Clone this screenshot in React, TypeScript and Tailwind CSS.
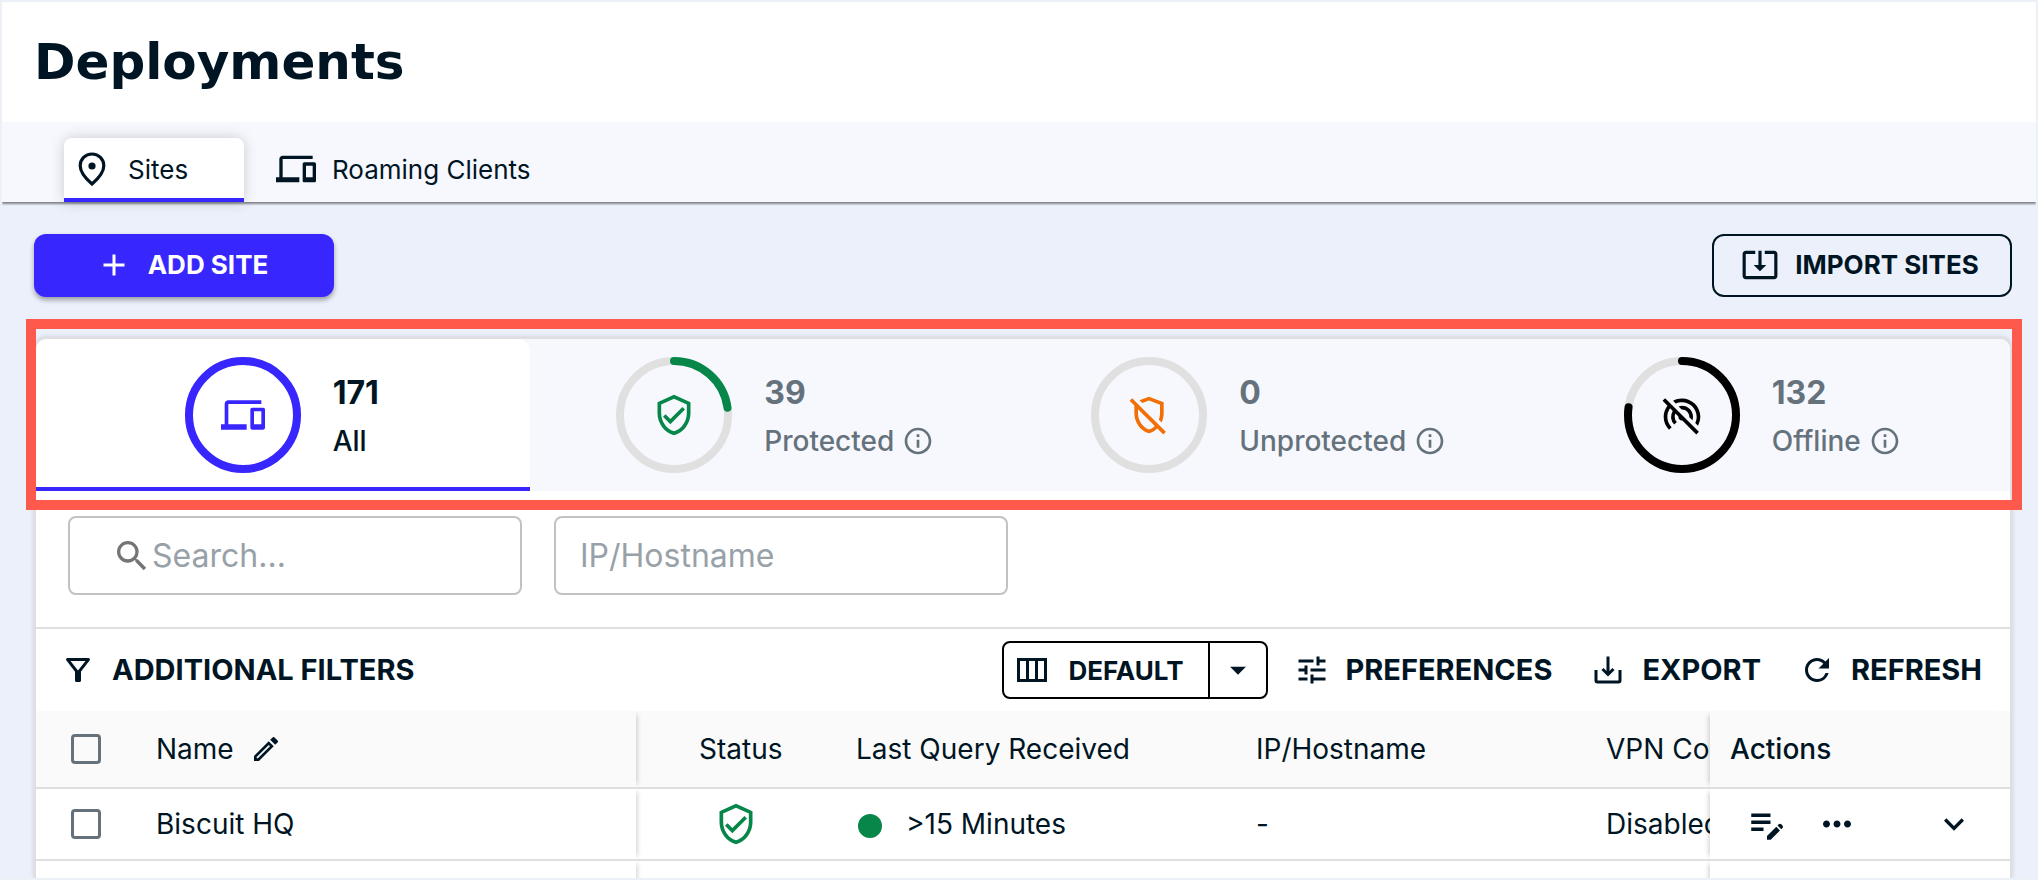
import type { ReactNode } from 'react'
import type { IconType } from 'react-icons'
import {
  MdAdd,
  MdArrowDropDown,
  MdEditNote,
  MdExpandMore,
  MdMoreHoriz,
  MdOutlineDevices,
  MdOutlineEdit,
  MdOutlineFilterAlt,
  MdOutlineInfo,
  MdOutlineRemoveModerator,
  MdOutlineSystemUpdateAlt,
  MdOutlineVerifiedUser,
  MdRefresh,
  MdSearch,
  MdTune,
  MdWifiTetheringOff,
} from 'react-icons/md'

const stats = [
  { icon: MdOutlineDevices, count: 171, label: 'All', ratio: 1, color: '#3826ff' },
  { icon: MdOutlineVerifiedUser, count: 39, label: 'Protected', ratio: 0.228, color: '#068649' },
  { icon: MdOutlineRemoveModerator, count: 0, label: 'Unprotected', ratio: 0, color: '#f26f05' },
  { icon: MdWifiTetheringOff, count: 132, label: 'Offline', ratio: 0.772, color: '#000000' },
]

type RingProps = {
  icon: IconType
  ratio: number
  color: string
}

function Ring({ icon: Icon, ratio, color }: RingProps) {
  const length = 2 * Math.PI * 54

  return (
    <span className="grid shrink-0 place-items-center">
      <svg className="col-start-1 row-start-1 size-[116px] -rotate-90" viewBox="0 0 116 116" fill="none">
        <circle cx="58" cy="58" r="54" stroke="#e0e0e0" strokeWidth="8" />
        {ratio > 0 && (
          <circle
            cx="58"
            cy="58"
            r="54"
            stroke={color}
            strokeWidth="8"
            strokeLinecap="round"
            strokeDasharray={`${length * ratio} ${length}`}
          />
        )}
      </svg>
      <Icon className="col-start-1 row-start-1" size={44} color={color} />
    </span>
  )
}

function PinIcon() {
  return (
    <svg className="h-[34px] w-7" viewBox="0 0 28 34" fill="none">
      <path
        d="M14 2C7.300 2 2.200 7.200 2.200 13.800C2.200 20.300 7 26 14 32C21 26 25.800 20.300 25.800 13.800C25.800 7.200 20.700 2 14 2Z"
        stroke="currentColor"
        strokeWidth="3.200"
      />
      <circle cx="14" cy="14" r="3.600" fill="currentColor" />
    </svg>
  )
}

function ColumnsIcon() {
  return (
    <svg className="size-9" viewBox="0 0 36 36" fill="none" stroke="currentColor" strokeWidth="3">
      <path d="M4.500 7.500h27v21h-27zM13.500 7.500v21M22.500 7.500v21" />
    </svg>
  )
}

function ExportIcon() {
  return (
    <svg className="size-9" viewBox="0 0 36 36" fill="none" stroke="currentColor" strokeWidth="3">
      <path d="M18 4.500v18M12.500 17l5.500 5.500 5.500-5.500" />
      <path d="M6 18v10.500a1.500 1.500 0 0 0 1.500 1.500h21a1.500 1.500 0 0 0 1.500-1.500V18" />
    </svg>
  )
}

function ToolbarButton({ icon, children }: { icon: ReactNode; children: ReactNode }) {
  return (
    <button type="button" className="flex items-center gap-4 text-[29px] leading-9 font-bold">
      {icon}
      {children}
    </button>
  )
}

function Checkbox({ label }: { label: string }) {
  return (
    <input
      type="checkbox"
      aria-label={label}
      className="block size-[30px] appearance-none rounded-sm border-3 border-[#65727c]"
    />
  )
}

export default function App() {
  return (
    <div className="flex h-screen flex-col overflow-hidden border-2 border-[#ecf1f7] bg-[#ecf0fa] font-['Inter',sans-serif] text-[#001524]">
      <header className="shrink-0 bg-white px-8 py-7">
        <h1 className="font-['DejaVu_Sans',sans-serif] text-[50px] leading-16 font-bold">Deployments</h1>
      </header>

      <nav className="z-10 flex h-20 shrink-0 items-end gap-8 bg-[#f6f8fe] px-[62px] shadow-[0_2px_2px_rgba(0,0,0,0.45)]">
        <a
          href="#sites"
          className="flex h-16 w-[180px] items-center gap-[22px] rounded-t-lg border-b-4 border-[#3826ff] bg-white pt-0.5 pl-3.5 text-[26px] shadow-[0_0_14px_rgba(0,0,0,0.18)]"
        >
          <PinIcon />
          Sites
        </a>
        <a href="#roaming" className="flex h-16 items-center gap-4 pb-0.5 text-[26px]">
          <MdOutlineDevices size={40} />
          Roaming Clients
        </a>
      </nav>

      <main className="flex min-h-0 flex-1 flex-col pt-8 pr-4 pl-6">
        <div className="flex shrink-0 justify-between px-2">
          <button
            type="button"
            className="flex h-[63px] w-[300px] items-center justify-center gap-4 rounded-xl bg-[#3826ff] pr-1 pb-0.5 text-[26px] font-bold text-white shadow-[0_3px_5px_rgba(0,0,0,0.35)]"
          >
            <MdAdd size={36} />
            ADD SITE
          </button>
          <button
            type="button"
            className="flex h-[63px] w-[300px] items-center justify-center gap-4 rounded-xl border-2 border-[#001524] pr-1 pb-0.5 text-[26px] font-bold"
          >
            <MdOutlineSystemUpdateAlt size={38} />
            IMPORT SITES
          </button>
        </div>

        <div className="relative mt-10 flex min-h-0 flex-1 flex-col px-2">
          {/* highlight frame around the summary tabs */}
          <div className="pointer-events-none absolute -top-[18px] -right-0.5 left-0 z-20 h-[191px] border-10 border-[#ff594b]" />

          <section className="flex min-h-0 flex-1 flex-col overflow-hidden rounded-t-xl border-2 border-b-0 border-[#dfdfdf] bg-white shadow-[0_0_5px_rgba(0,0,0,0.15)]">
            <div className="grid shrink-0 grid-cols-4 bg-[#f6f8fe]" role="tablist">
              {stats.map((stat, index) => (
                <button
                  key={stat.label}
                  type="button"
                  role="tab"
                  aria-selected={index === 0}
                  className={
                    index === 0
                      ? 'flex h-[152px] items-center justify-center gap-8 rounded-t-xl border-b-4 border-[#3826ff] bg-white pt-1 pr-0.5'
                      : 'flex h-[152px] items-center justify-center gap-8 border-b-4 border-transparent pt-1 pr-0.5 text-[#65727c]'
                  }
                >
                  <Ring icon={stat.icon} ratio={stat.ratio} color={stat.color} />
                  <span className="flex flex-col items-start gap-2 pt-1">
                    <span className="text-[32px] leading-10 font-bold">{stat.count}</span>
                    <span className="flex items-center gap-2 text-[28px] leading-10 font-medium">
                      {stat.label}
                      {index > 0 && <MdOutlineInfo size={32} />}
                    </span>
                  </span>
                </button>
              ))}
            </div>

            <div className="flex shrink-0 gap-8 border-b-2 border-[#dfdfdf] px-8 pt-[25px] pb-8">
              <label className="flex h-[79px] w-[454px] items-center rounded-lg border-2 border-[#c2c2c2] pl-[42px]">
                <MdSearch className="shrink-0 text-[#757575]" size={40} />
                <input
                  type="text"
                  aria-label="Search"
                  placeholder="Search..."
                  className="min-w-0 flex-1 text-[32px] outline-none placeholder:text-[#98a1a8]"
                />
              </label>
              <input
                type="text"
                aria-label="IP/Hostname"
                placeholder="IP/Hostname"
                className="h-[79px] w-[454px] rounded-lg border-2 border-[#c2c2c2] px-6 text-[32px] outline-none placeholder:text-[#98a1a8]"
              />
            </div>

            <div className="flex h-[82px] shrink-0 items-center gap-[38px] pr-7 pl-6">
              <div className="mr-auto">
                <ToolbarButton icon={<MdOutlineFilterAlt size={36} />}>ADDITIONAL FILTERS</ToolbarButton>
              </div>
              <div className="-mr-3 flex h-[58px] rounded-lg border-2 border-black text-[26px] font-bold">
                <button type="button" className="flex items-center gap-[18px] pr-6 pl-2.5">
                  <ColumnsIcon />
                  DEFAULT
                </button>
                <button
                  type="button"
                  aria-label="Choose view"
                  className="flex w-[58px] items-center justify-center border-l-2 border-black"
                >
                  <MdArrowDropDown size={38} />
                </button>
              </div>
              <ToolbarButton icon={<MdTune size={36} />}>PREFERENCES</ToolbarButton>
              <ToolbarButton icon={<ExportIcon />}>EXPORT</ToolbarButton>
              <ToolbarButton icon={<MdRefresh size={36} />}>REFRESH</ToolbarButton>
            </div>

            <table className="w-full table-fixed border-collapse text-left text-[28px]">
              <thead>
                <tr className="h-[77px] border-b-2 border-[#dfdfdf] bg-[#fafafa]">
                  <th className="w-[120px] pl-[35px]">
                    <Checkbox label="Select all" />
                  </th>
                  <th className="w-[480px] font-normal shadow-[5px_0_5px_-4px_rgba(0,0,0,0.2)]">
                    <span className="flex items-center gap-4">
                      Name
                      <MdOutlineEdit size={32} />
                    </span>
                  </th>
                  <th className="w-[220px] pl-[63px] font-normal">Status</th>
                  <th className="w-[400px] font-normal">Last Query Received</th>
                  <th className="w-[350px] font-normal">IP/Hostname</th>
                  <th className="overflow-hidden font-normal whitespace-nowrap">VPN Connection</th>
                  <th className="w-[300px] bg-[#fafafa] pl-5 font-medium shadow-[-5px_0_5px_-4px_rgba(0,0,0,0.2)]">
                    Actions
                  </th>
                </tr>
              </thead>
              <tbody>
                <tr className="h-[72px] border-b-2 border-[#dfdfdf]">
                  <td className="pl-[35px]">
                    <Checkbox label="Select Biscuit HQ" />
                  </td>
                  <td className="shadow-[5px_0_5px_-4px_rgba(0,0,0,0.2)]">Biscuit HQ</td>
                  <td className="pl-[78px]">
                    <MdOutlineVerifiedUser size={44} color="#068649" />
                  </td>
                  <td>
                    <span className="flex items-center gap-6 pl-0.5">
                      <span className="mt-1 size-6 rounded-full bg-[#068649]" />
                      &gt;15 Minutes
                    </span>
                  </td>
                  <td>-</td>
                  <td className="overflow-hidden whitespace-nowrap">Disabled</td>
                  <td className="bg-white pr-9 pl-9 shadow-[-5px_0_5px_-4px_rgba(0,0,0,0.2)]">
                    <span className="flex items-center">
                      <button type="button" aria-label="Edit">
                        <MdEditNote size={42} />
                      </button>
                      <button type="button" aria-label="More" className="ml-7">
                        <MdMoreHoriz size={42} />
                      </button>
                      <button type="button" aria-label="Expand" className="ml-auto">
                        <MdExpandMore size={40} />
                      </button>
                    </span>
                  </td>
                </tr>
                <tr className="h-[72px]">
                  <td />
                  <td className="shadow-[5px_0_5px_-4px_rgba(0,0,0,0.2)]" />
                  <td />
                  <td />
                  <td />
                  <td />
                  <td className="shadow-[-5px_0_5px_-4px_rgba(0,0,0,0.2)]" />
                </tr>
              </tbody>
            </table>
          </section>
        </div>
      </main>
    </div>
  )
}
